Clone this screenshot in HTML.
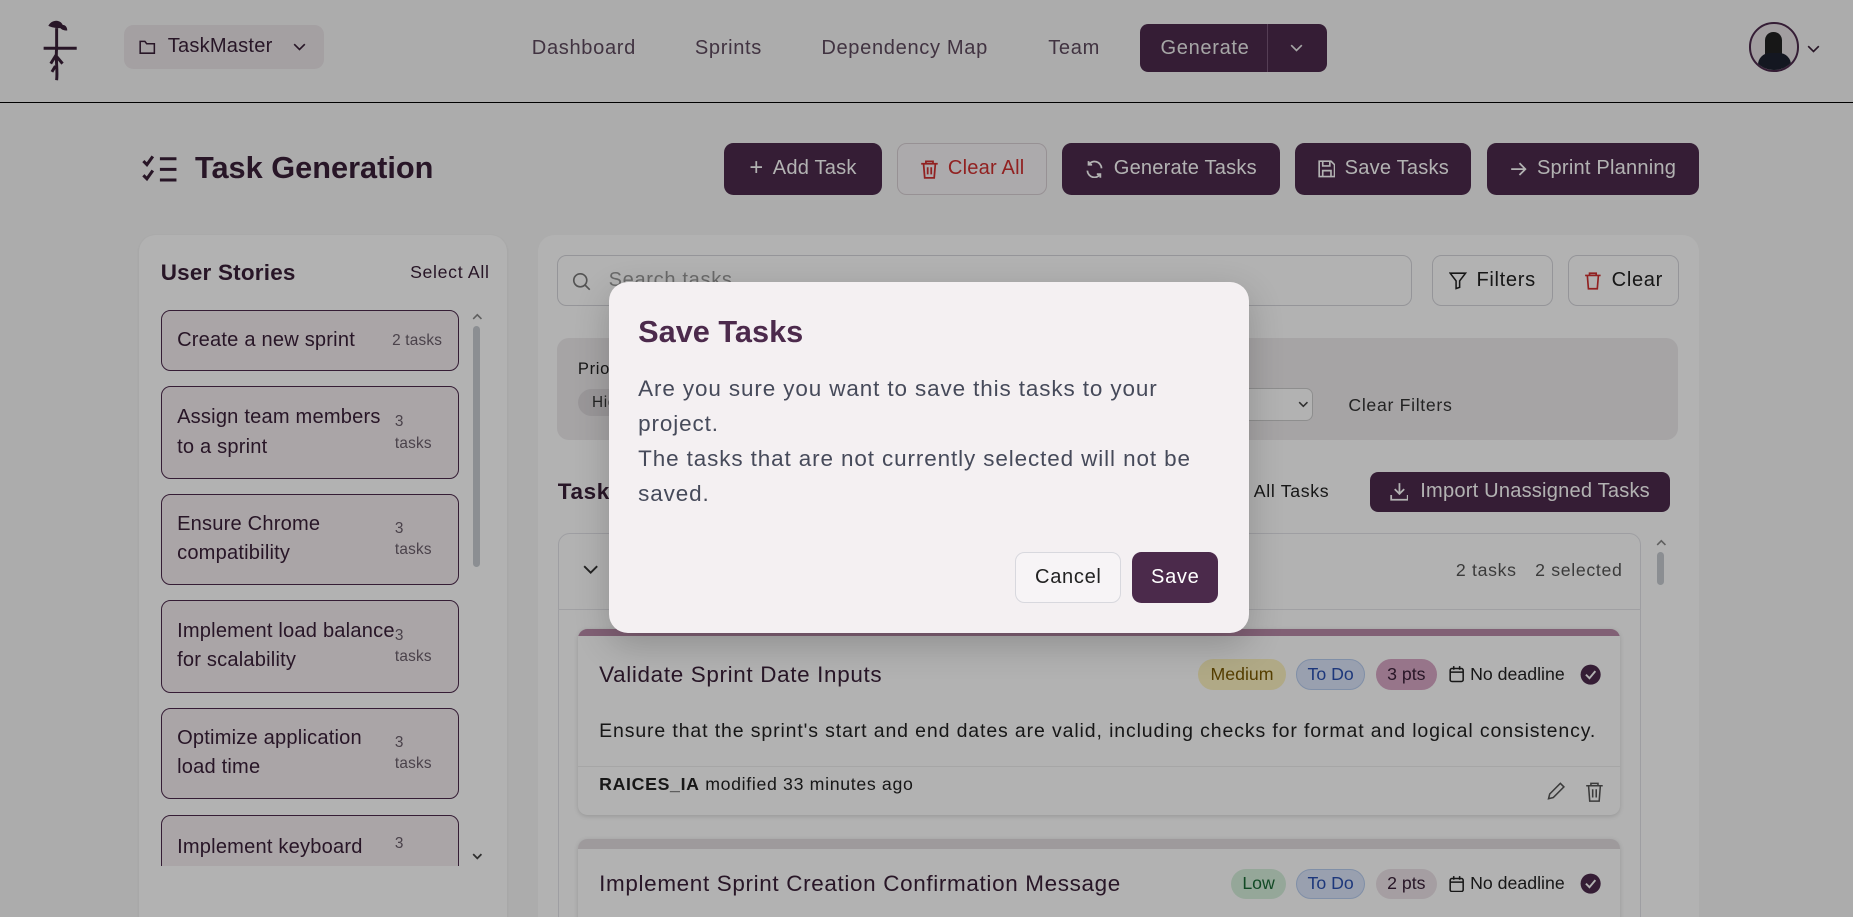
<!DOCTYPE html>
<html><head><meta charset="utf-8"><style>
*{box-sizing:border-box;margin:0;padding:0}
html,body{width:1853px;height:917px;overflow:hidden;background:#f7f7f7}
#w{position:relative;width:1568px;height:776px;zoom:1.181760;font-family:"Liberation Sans",sans-serif;color:#3a2038;background:#f7f7f7;overflow:hidden;letter-spacing:0.035em}
.a{position:absolute}
.btn{position:absolute;top:121px;height:44px;border-radius:8px;background:#4c2a4c;color:#fff;font-size:17px;display:flex;align-items:center;justify-content:center;gap:8px;letter-spacing:0.01em}
.nav{position:absolute;top:31px;font-size:17px;color:#5e4a5e}
.story{position:absolute;left:136px;width:252px;border:1px solid #4c2a4c;border-radius:8px;background:#f4ecf0;font-size:17px;color:#3a2038;padding:0 13px;display:flex;align-items:center;justify-content:space-between;line-height:25px;letter-spacing:0.01em}
.story small{font-size:13px;color:#6b5f6b;line-height:18px;width:40px}
.badge{position:absolute;height:26px;border-radius:13px;font-size:15px;display:flex;align-items:center;justify-content:center;letter-spacing:0}
#ov{position:absolute;left:0;top:0;width:1568px;height:776px;background:rgba(0,0,0,.3)}
svg{display:block}
</style></head><body><div id="w">
<!-- nav -->
<div class="a" style="left:0;top:86px;width:1568px;height:1px;background:#000"></div>
<svg class="a" style="left:28px;top:12px" width="44" height="58" viewBox="0 0 44 58"><path d="M13 10c3-6 12-6 13 2-4 0-9 0-13-2zM22 10c4-2 7 0 7 4-3 0-6-1-7-4z" fill="#3a2038"/><path d="M20 12v16M9 29h28M20 29c-1 10 1 18 0 27M20 34l-5 8M20 36l5 6M19 44l-3 5" stroke="#3a2038" stroke-width="2.5" fill="none"/></svg>
<div class="a" style="left:105px;top:21px;width:169px;height:37px;border-radius:8px;background:#ebe6e9"></div>
<svg class="a" style="left:118px;top:33px" width="14" height="13" viewBox="0 0 14 13"><path d="M1 2h4l1.5 2H13v8H1z" fill="none" stroke="#3a2038" stroke-width="1.3"/></svg>
<div class="a" style="left:142px;top:30px;font-size:17px;letter-spacing:0.01em">TaskMaster</div>
<svg class="a" style="left:248px;top:36px" width="11" height="7"><path d="M1 1l4.5 4.5L10 1" stroke="#3a2038" stroke-width="1.4" fill="none"/></svg>
<div class="nav" style="left:450px">Dashboard</div>
<div class="nav" style="left:588px">Sprints</div>
<div class="nav" style="left:695px">Dependency Map</div>
<div class="nav" style="left:887px">Team</div>
<div class="a" style="left:965px;top:20px;width:158px;height:41px;border-radius:7px;background:#4c2a4c"></div>
<div class="a" style="left:1072px;top:20px;width:1px;height:41px;background:#7a5a7a"></div>
<div class="a" style="left:982px;top:31px;font-size:17px;color:#eee">Generate</div>
<svg class="a" style="left:1092px;top:37px" width="11" height="7"><path d="M1 1l4.5 4.5L10 1" stroke="#eee" stroke-width="1.4" fill="none"/></svg>
<div class="a" style="left:1480px;top:19px;width:42px;height:42px;border-radius:50%;border:2px solid #4c2a4c;background:#e8e2e6;overflow:hidden"><div style="position:absolute;left:12px;top:6px;width:14px;height:22px;border-radius:7px 7px 3px 3px;background:#222"></div><div style="position:absolute;left:6px;top:24px;width:28px;height:20px;border-radius:10px 10px 0 0;background:#1d2130"></div></div>
<svg class="a" style="left:1529px;top:38px" width="11" height="7"><path d="M1 1l4.5 4.5L10 1" stroke="#3a2038" stroke-width="1.4" fill="none"/></svg>
<!-- title -->
<svg class="a" style="left:119px;top:130px" width="34" height="26" viewBox="0 0 34 26"><path d="M2 6l3 3 5-7M2 18l3 3 5-7M16 4h14M16 13h14M16 22h14" stroke="#3a2038" stroke-width="2.6" fill="none"/></svg>
<div class="a" style="left:165px;top:127px;font-size:26px;font-weight:bold;letter-spacing:0">Task Generation</div>
<div class="btn" style="left:613px;width:133px"><span style="font-size:20px">+</span>Add Task</div>
<div class="btn" style="left:759px;width:127px;background:#f7f4f6;border:1px solid #d8d0d5;color:#d03030"><svg width="16" height="17" viewBox="0 0 16 17"><path d="M1 4h14M5 4V2h6v2M3 4l1 12h8l1-12M6.5 7v6M9.5 7v6" stroke="#d03030" stroke-width="1.5" fill="none"/></svg>Clear All</div>
<div class="btn" style="left:899px;width:184px"><svg width="16" height="16" viewBox="0 0 16 16"><path d="M14 7A6 6 0 0 0 3 4M2 9a6 6 0 0 0 11 3M3 1v3h3M13 15v-3h-3" stroke="#fff" stroke-width="1.5" fill="none"/></svg>Generate Tasks</div>
<div class="btn" style="left:1096px;width:149px"><svg width="15" height="15" viewBox="0 0 15 15"><path d="M1 1h10l3 3v10H1zM4 1v4h6V1M4 14V9h7v5" stroke="#fff" stroke-width="1.4" fill="none"/></svg>Save Tasks</div>
<div class="btn" style="left:1258px;width:180px"><svg width="15" height="12" viewBox="0 0 15 12"><path d="M1 6h12M8 1l5 5-5 5" stroke="#fff" stroke-width="1.5" fill="none"/></svg>Sprint Planning</div>
<!-- left panel -->
<div class="a" style="left:118px;top:199px;width:311px;height:600px;border-radius:14px;background:#fff;box-shadow:0 1px 3px rgba(0,0,0,.08)"></div>
<div class="a" style="left:136px;top:220px;font-size:19px;font-weight:bold;letter-spacing:0.01em">User Stories</div>
<div class="a" style="left:347px;top:222px;font-size:15px">Select All</div>
<div class="a" style="left:400px;top:276px;width:6px;height:204px;border-radius:3px;background:#c8ccd2"></div>
<svg class="a" style="left:399px;top:265px" width="9" height="6"><path d="M1 5l3.5-3.5L8 5" stroke="#888" stroke-width="1.3" fill="none"/></svg>
<svg class="a" style="left:399px;top:722px" width="9" height="6"><path d="M1 1l3.5 3.5L8 1" stroke="#444" stroke-width="1.5" fill="none"/></svg>
<div class="story" style="top:262px;height:52px"><span>Create a new sprint</span><small style="width:auto">2 tasks</small></div>
<div class="story" style="top:327px;height:78px"><span>Assign team members<br>to a sprint</span><small>3<br>tasks</small></div>
<div class="story" style="top:418px;height:77px"><span>Ensure Chrome<br>compatibility</span><small>3<br>tasks</small></div>
<div class="story" style="top:508px;height:78px"><span>Implement load balance<br>for scalability</span><small>3<br>tasks</small></div>
<div class="story" style="top:599px;height:77px"><span>Optimize application<br>load time</span><small>3<br>tasks</small></div>
<div class="story" style="top:690px;height:78px;align-items:flex-start;padding-top:14px"><span>Implement keyboard</span><small>3</small></div>
<div class="a" style="left:118px;top:733px;width:311px;height:50px;background:#fff"></div>
<!-- right panel -->
<div class="a" style="left:455px;top:199px;width:983px;height:600px;border-radius:14px;background:#fff"></div>
<div class="a" style="left:471px;top:216px;width:724px;height:43px;border:1px solid #d6d6dc;border-radius:8px"></div>
<svg class="a" style="left:484px;top:230px" width="16" height="16" viewBox="0 0 16 16"><circle cx="7" cy="7" r="5.5" stroke="#777" stroke-width="1.4" fill="none"/><path d="M11 11l4 4" stroke="#777" stroke-width="1.4"/></svg>
<div class="a" style="left:515px;top:228px;font-size:17px;color:#999">Search tasks...</div>
<div class="a" style="left:1212px;top:216px;width:102px;height:43px;border:1px solid #d6d6dc;border-radius:8px;font-size:17px;display:flex;align-items:center;justify-content:center;gap:8px;color:#222"><svg width="15" height="15" viewBox="0 0 15 15"><path d="M1 1h13L9 7.5V13l-3 1V7.5z" stroke="#222" stroke-width="1.3" fill="none"/></svg>Filters</div>
<div class="a" style="left:1327px;top:216px;width:94px;height:43px;border:1px solid #d6d6dc;border-radius:8px;font-size:17px;display:flex;align-items:center;justify-content:center;gap:8px;color:#222"><svg width="15" height="16" viewBox="0 0 16 17"><path d="M1 4h14M5 4V2h6v2M3 4l1 12h8l1-12" stroke="#d03030" stroke-width="1.5" fill="none"/></svg>Clear</div>
<div class="a" style="left:471px;top:286px;width:949px;height:86px;border-radius:10px;background:#eeebed"></div>
<div class="a" style="left:489px;top:304px;font-size:14px;color:#222">Priority</div>
<div class="a" style="left:489px;top:329px;width:60px;height:23px;border-radius:12px;background:#ddd8db;font-size:13px;padding:4px 12px;color:#333">High</div>
<div class="a" style="left:1000px;top:328px;width:111px;height:28px;border:1px solid #ccc;border-radius:6px;background:#fff"></div>
<svg class="a" style="left:1098px;top:339px" width="9" height="6"><path d="M1 1l3.5 3.5L8 1" stroke="#444" stroke-width="1.3" fill="none"/></svg>
<div class="a" style="left:1141px;top:334px;font-size:15px;color:#333">Clear Filters</div>
<div class="a" style="left:472px;top:405px;font-size:19px;font-weight:bold">Tasks</div>
<div class="a" style="left:1012px;top:407px;font-size:15px;color:#222">Select All Tasks</div>
<div class="a" style="left:1159px;top:399px;width:254px;height:34px;border-radius:7px;background:#4c2a4c;color:#fff;font-size:17px;display:flex;align-items:center;justify-content:center;gap:10px;letter-spacing:0.01em"><svg width="16" height="16" viewBox="0 0 16 16"><path d="M8 1v9M4 6l4 4 4-4M1 11v4h14v-4" stroke="#fff" stroke-width="1.5" fill="none"/></svg>Import Unassigned Tasks</div>
<div class="a" style="left:472px;top:451px;width:917px;height:340px;border:1px solid #e3e3e8;border-radius:10px"></div>
<div class="a" style="left:472px;top:515px;width:917px;height:1px;background:#e5e5ea"></div>
<svg class="a" style="left:493px;top:478px" width="13" height="8"><path d="M1 1l5.5 5.5L12 1" stroke="#333" stroke-width="1.6" fill="none"/></svg>
<div class="a" style="left:1232px;top:474px;font-size:15px;color:#555">2 tasks</div>
<div class="a" style="left:1299px;top:474px;font-size:15px;color:#555">2 selected</div>
<div class="a" style="left:1402px;top:467px;width:6px;height:28px;border-radius:3px;background:#c8ccd2"></div>
<svg class="a" style="left:1401px;top:456px" width="9" height="6"><path d="M1 5l3.5-3.5L8 5" stroke="#888" stroke-width="1.3" fill="none"/></svg>
<!-- card1 -->
<div class="a" style="left:489px;top:532px;width:882px;height:158px;border-radius:8px;background:#fff;box-shadow:0 1px 4px rgba(0,0,0,.15);overflow:hidden"><div style="height:6px;background:#b98aa8"></div></div>
<div class="a" style="left:507px;top:560px;font-size:19px;color:#3a2038">Validate Sprint Date Inputs</div>
<div class="badge" style="left:1014px;top:558px;width:74px;background:#fdf2c0;color:#7a5a00">Medium</div>
<div class="badge" style="left:1097px;top:558px;width:58px;background:#dbe6fb;color:#2a50b0;border:1px solid #b8cdf0">To Do</div>
<div class="badge" style="left:1164px;top:558px;width:52px;background:#d9a8c6;color:#3a2038">3 pts</div>
<svg class="a" style="left:1226px;top:563px" width="13" height="15" viewBox="0 0 13 15"><rect x="1" y="3" width="11" height="11" rx="1.5" stroke="#222" stroke-width="1.3" fill="none"/><path d="M1 6h11M4 1v3M9 1v3" stroke="#222" stroke-width="1.3"/></svg>
<div class="a" style="left:1244px;top:562px;font-size:15px;color:#222;letter-spacing:0">No deadline</div>
<svg class="a" style="left:1337px;top:562px" width="18" height="18"><circle cx="9" cy="9" r="8.5" fill="#4c2a4c"/><path d="M5 9l3 3 5-6" stroke="#fff" stroke-width="1.6" fill="none"/></svg>
<div class="a" style="left:507px;top:609px;font-size:16.5px;color:#222;letter-spacing:0.045em;white-space:nowrap">Ensure that the sprint's start and end dates are valid, including checks for format and logical consistency.</div>
<div class="a" style="left:489px;top:648px;width:882px;height:1px;background:#eee"></div>
<div class="a" style="left:507px;top:655px;font-size:15px;color:#222"><b>RAICES_IA</b> modified 33 minutes ago</div>
<svg class="a" style="left:1307px;top:661px" width="18" height="18" viewBox="0 0 18 18"><path d="M3 15l1-4 9-9 3 3-9 9z" stroke="#555" stroke-width="1.3" fill="none"/></svg>
<svg class="a" style="left:1341px;top:661px" width="16" height="18" viewBox="0 0 16 18"><path d="M1 4h14M5 4V2h6v2M3 4l1 13h8l1-13M6.5 7v7M9.5 7v7" stroke="#555" stroke-width="1.3" fill="none"/></svg>
<!-- card2 -->
<div class="a" style="left:489px;top:710px;width:882px;height:100px;border-radius:8px;background:#fff;box-shadow:0 1px 4px rgba(0,0,0,.15);overflow:hidden"><div style="height:8px;background:#e2dde0"></div></div>
<div class="a" style="left:507px;top:737px;font-size:19px;color:#3a2038">Implement Sprint Creation Confirmation Message</div>
<div class="badge" style="left:1042px;top:735px;width:46px;background:#d6f0dc;color:#1a6a36">Low</div>
<div class="badge" style="left:1097px;top:735px;width:58px;background:#dbe6fb;color:#2a50b0;border:1px solid #b8cdf0">To Do</div>
<div class="badge" style="left:1164px;top:735px;width:52px;background:#ece3e8;color:#3a2038">2 pts</div>
<svg class="a" style="left:1226px;top:740px" width="13" height="15" viewBox="0 0 13 15"><rect x="1" y="3" width="11" height="11" rx="1.5" stroke="#222" stroke-width="1.3" fill="none"/><path d="M1 6h11M4 1v3M9 1v3" stroke="#222" stroke-width="1.3"/></svg>
<div class="a" style="left:1244px;top:739px;font-size:15px;color:#222;letter-spacing:0">No deadline</div>
<svg class="a" style="left:1337px;top:739px" width="18" height="18"><circle cx="9" cy="9" r="8.5" fill="#4c2a4c"/><path d="M5 9l3 3 5-6" stroke="#fff" stroke-width="1.6" fill="none"/></svg>
<div id="ov"></div>
<!-- modal -->
<div class="a" style="left:515px;top:239px;width:542px;height:297px;border-radius:16px;background:#f4f0f2;box-shadow:0 10px 30px rgba(0,0,0,.2)"></div>
<div class="a" style="left:540px;top:266px;font-size:26px;font-weight:bold;color:#4c2a4c;letter-spacing:0">Save Tasks</div>
<div class="a" style="left:540px;top:315px;width:500px;font-size:19px;line-height:29.5px;color:#464a5a;letter-spacing:0.04em;white-space:nowrap">Are you sure you want to save this tasks to your<br>project.<br>The tasks that are not currently selected will not be<br>saved.</div>
<div class="a" style="left:859px;top:467px;width:90px;height:43px;border:1px solid #d8d8de;border-radius:8px;background:#f7f4f6;font-size:17px;color:#222;display:flex;align-items:center;justify-content:center">Cancel</div>
<div class="a" style="left:958px;top:467px;width:73px;height:43px;border-radius:8px;background:#4b2a4b;font-size:17px;color:#fff;display:flex;align-items:center;justify-content:center">Save</div>
</div></body></html>
